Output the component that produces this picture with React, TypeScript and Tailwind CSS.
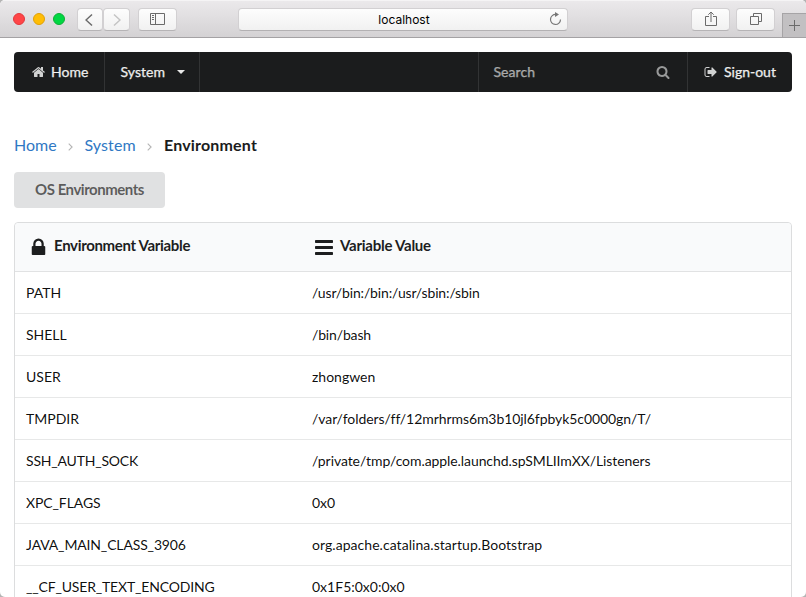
import React from "react";

const rows: { name: string; nameClass: string; value: string; valueClass: string }[] = [
  { name: "PATH", nameClass: "", value: "/usr/bin:/bin:/usr/sbin:/sbin", valueClass: "tracking-[-0.14px]" },
  { name: "SHELL", nameClass: "", value: "/bin/bash", valueClass: "tracking-[-0.15px]" },
  { name: "USER", nameClass: "", value: "zhongwen", valueClass: "" },
  {
    name: "TMPDIR",
    nameClass: "",
    value: "/var/folders/ff/12mrhrms6m3b10jl6fpbyk5c0000gn/T/",
    valueClass: "tracking-[-0.07px] [font-variant-ligatures:normal]",
  },
  {
    name: "SSH_AUTH_SOCK",
    nameClass: "tracking-[-0.2px]",
    value: "/private/tmp/com.apple.launchd.spSMLIImXX/Listeners",
    valueClass: "tracking-[-0.08px]",
  },
  { name: "XPC_FLAGS", nameClass: "tracking-[-0.1px]", value: "0x0", valueClass: "" },
  {
    name: "JAVA_MAIN_CLASS_3906",
    nameClass: "tracking-[-0.15px]",
    value: "org.apache.catalina.startup.Bootstrap",
    valueClass: "tracking-[0.05px]",
  },
  { name: "__CF_USER_TEXT_ENCODING", nameClass: "tracking-[-0.17px]", value: "0x1F5:0x0:0x0", valueClass: "" },
];

const paths = {
  home: "M1408 992v480q0 26-19 45t-45 19h-384v-384h-256v384h-384q-26 0-45-19t-19-45v-480q0-1 .5-3t.5-3l575-474 575 474q1 2 1 6zm223-69l-62 74q-8 9-21 11h-3q-13 0-21-7l-692-577-692 577q-12 8-24 7-13-2-21-11l-62-74q-8-10-7-23.5t11-21.5l719-599q32-26 76-26t76 26l244 204v-195q0-14 9-23t23-9h192q14 0 23 9t9 23v408l219 182q10 8 11 21.5t-7 23.5z",
  search:
    "M1216 832q0-185-131.5-316.5t-316.5-131.5-316.5 131.5-131.5 316.5 131.5 316.5 316.5 131.5 316.5-131.5 131.5-316.5zm512 832q0 52-38 90t-90 38q-54 0-90-38l-343-342q-179 124-399 124-143 0-273.5-55.5t-225-150-150-225-55.5-273.5 55.5-273.5 150-225 225-150 273.5-55.5 273.5 55.5 225 150 150 225 55.5 273.5q0 220-124 399l343 343q37 37 37 90z",
  lock: "M640 768h512v-192q0-106-75-181t-181-75-181 75-75 181v192zm832 96v576q0 40-28 68t-68 28h-960q-40 0-68-28t-28-68v-576q0-40 28-68t68-28h32v-192q0-184 132-316t316-132 316 132 132 316v192h32q40 0 68 28t28 68z",
  signOut:
    "M704 1440q0 4 1 20t.5 26.5-3 23.5-10 19.5-20.5 6.5h-320q-119 0-203.5-84.5t-84.5-203.5v-704q0-119 84.5-203.5t203.5-84.5h320q13 0 22.5 9.5t9.5 22.5q0 4 1 20t.5 26.5-3 23.5-10 19.5-20.5 6.5h-320q-66 0-113 47t-47 113v704q0 66 47 113t113 47h312l11.5 1 11.5 3 8 5.5 7 9 2 13.5zm928-544q0 26-19 45l-544 544q-19 19-45 19t-45-19-19-45v-288h-448q-26 0-45-19t-19-45v-384q0-26 19-45t45-19h448v-288q0-26 19-45t45-19 45 19l544 544q19 19 19 45z",
};

function Icon({ d, className }: { d: string; className: string }) {
  return (
    <svg viewBox="0 0 1792 1792" fill="currentColor" className={`shrink-0 ${className}`}>
      <path d={d} />
    </svg>
  );
}

function ToolButton({ className, children }: { className: string; children: React.ReactNode }) {
  return (
    <button
      className={`flex h-[23px] shrink-0 items-center justify-center rounded border border-[#d2d0d2] border-b-[#b6b4b6] bg-linear-to-b from-[#fdfdfd] to-[#f1f1f1] text-[#6b6b6b] ${className}`}
    >
      {children}
    </button>
  );
}

function BrowserBar() {
  return (
    <header className="flex h-[38px] shrink-0 items-start border-t border-b border-t-[#f5f4f5] border-b-[#a4a2a4] bg-linear-to-b from-[#ebe9eb] to-[#d4d2d4] pt-[7px]">
      <div className="mt-[5px] ml-[13px] flex gap-2">
        <span className="size-3 rounded-full border border-[#e2383d] bg-[#ff4547]" />
        <span className="size-3 rounded-full border border-[#e0a008] bg-[#ffbd05]" />
        <span className="size-3 rounded-full border border-[#0dae36] bg-[#00d742]" />
      </div>
      <ToolButton className="ml-3 w-[26px]">
        <svg width="8" height="14" viewBox="0 0 8 14" fill="none" stroke="currentColor" strokeWidth="1.5" className="-ml-0.5">
          <path d="M7 1.5 1 7l6 5.5" />
        </svg>
      </ToolButton>
      <ToolButton className="w-[27px]">
        <svg width="8" height="14" viewBox="0 0 8 14" fill="none" stroke="#c4c4c4" strokeWidth="1.5">
          <path d="m1 1.5 6 5.5-6 5.5" />
        </svg>
      </ToolButton>
      <ToolButton className="ml-2 w-[39px]">
        <svg width="15" height="12" viewBox="0 0 15 12" fill="none" stroke="currentColor" className="-mt-px">
          <path d="M.5.5h14v11H.5zM5.5.5v11M2 2.5h2M2 4.5h2M2 6.5h2" />
        </svg>
      </ToolButton>
      <div className="ml-[61px] flex h-[23px] w-[330px] items-center rounded border border-[#d2d0d2] border-b-[#b3b1b3] bg-linear-to-b from-[#fdfdfd] to-[#f1f1f1] pr-[5px] pl-[20px]">
        <span className="flex-1 text-center font-['Inter','Liberation_Sans',sans-serif] text-[12px] leading-[21px] text-black">
          localhost
        </span>
        <svg width="13" height="14" viewBox="0 0 13 14" fill="none" stroke="#777" className="-mt-0.5">
          <path d="M7 2.5A5 5 0 1 0 11.5 7.5" strokeWidth="1.2" />
          <path d="M6 0v5l4-2.5z" fill="#777" stroke="none" />
        </svg>
      </div>
      <ToolButton className="ml-[123px] w-[39px]">
        <svg width="12" height="16" viewBox="0 0 12 16" fill="none" stroke="currentColor" className="-mt-0.5">
          <path d="M4 5.5H.5v9h11v-9H8M6 11V1M3.3 3.7 6 1l2.7 2.7" />
        </svg>
      </ToolButton>
      <ToolButton className="ml-1.5 w-[39px]">
        <svg width="12" height="12" viewBox="0 0 12 12" fill="none" stroke="currentColor" className="-mt-px">
          <path d="M.5 3.5h8v8h-8zM3.5 3V.5h8v8H9" />
        </svg>
      </ToolButton>
      <button className="mt-[5px] ml-[7px] flex h-6 flex-1 items-center justify-center border-t border-l border-[#a6a4a6] bg-[#c2c0c2] text-[#6b6b6b]">
        <svg width="11" height="11" viewBox="0 0 11 11" stroke="currentColor" className="shrink-0">
          <path d="M5.5 0v11M0 5.5h11" />
        </svg>
      </button>
    </header>
  );
}

function NavBar() {
  return (
    <nav className="flex h-10 shrink-0 rounded bg-[#1b1c1d] text-[14px] leading-5 text-white/90 [-webkit-text-stroke:0.25px]">
      <a className="flex w-[91px] items-center border-r border-white/10 pl-[17px]">
        <Icon d={paths.home} className="mr-[6px] size-[14px] translate-x-px text-white/80" />
        Home
      </a>
      <a className="flex w-[95px] items-center border-r border-white/10 pl-[15.5px]">
        <span className="tracking-[0.05px]">System</span>
        <svg width="8" height="4" viewBox="0 0 8 4" fill="currentColor" className="ml-3">
          <path d="M0 0h8L4 4z" />
        </svg>
      </a>
      <div className="ml-auto flex w-[210px] items-center justify-between border-r border-l border-white/10 pr-[17px] pl-[14.5px] text-white/55">
        <span className="tracking-[0.05px]">Search</span>
        <Icon d={paths.search} className="size-[14px]" />
      </div>
      <a className="flex w-[104px] items-center pl-4">
        <Icon d={paths.signOut} className="mr-[6px] size-[14px] text-white/80" />
        Sign-out
      </a>
    </nav>
  );
}

function Chevron() {
  return (
    <svg width="5" height="8" viewBox="0 0 5 8" fill="none" stroke="#b5b5b5" strokeWidth="1.1" className="mt-[3px]">
      <path d="m.7.7 3.4 3.3L.7 7.3" />
    </svg>
  );
}

export default function App() {
  return (
    <div className="bg-[#b4b4b4] font-['Lato','Liberation_Sans',sans-serif] text-[14px] text-black/95">
      <div className="flex h-[597px] flex-col overflow-hidden rounded-[5px] bg-white">
        <BrowserBar />
        <main className="flex flex-1 flex-col px-[14px] pt-[14px]">
          <NavBar />
          <div className="mt-[41px] flex h-6 shrink-0 items-center text-[16px] leading-6 text-[#2f78c4]">
            <a className="w-[54px]">Home</a>
            <Chevron />
            <a className="ml-[11.5px] w-[62.5px] tracking-[0.1px]">System</a>
            <Chevron />
            <span className="ml-3 font-bold tracking-[0.17px] text-[#1b1c1d]">Environment</span>
          </div>
          <button className="mt-[15px] h-9 w-[151px] shrink-0 rounded bg-[#e0e1e2] pb-[2px] text-center text-[15px] font-bold tracking-[-0.48px] text-black/60">
            OS Environments
          </button>
          <section className="mt-[14px] shrink-0 rounded border border-[#dcddde]">
            <div className="grid h-[49px] grid-cols-[286px_1fr] rounded-t border-b border-[#e1e2e3] bg-[#f9fafb] text-[15px] font-bold text-[#1d1e1f]">
              <div className="flex items-center pb-[3px] pl-[13px]">
                <Icon d={paths.lock} className="mt-[4px] mr-[5px] size-[21px]" />
                <span className="tracking-[-0.33px]">Environment Variable</span>
              </div>
              <div className="flex items-center pb-[3px] pl-[14px]">
                <svg width="18" height="15" viewBox="0 0 18 15" fill="currentColor" className="mt-[4px] mr-[7px]">
                  <rect width="18" height="3" rx=".7" />
                  <rect y="6" width="18" height="3" rx=".7" />
                  <rect y="12" width="18" height="3" rx=".7" />
                </svg>
                <span className="tracking-[-0.25px]">Variable Value</span>
              </div>
            </div>
            {rows.map((row) => (
              <div key={row.name} className="grid h-[42px] grid-cols-[286px_1fr] items-center border-b border-[#e7e8e8]">
                <span className={`pl-[11px] ${row.nameClass}`}>{row.name}</span>
                <span className={`pl-[11px] ${row.valueClass}`}>{row.value}</span>
              </div>
            ))}
          </section>
        </main>
      </div>
    </div>
  );
}
